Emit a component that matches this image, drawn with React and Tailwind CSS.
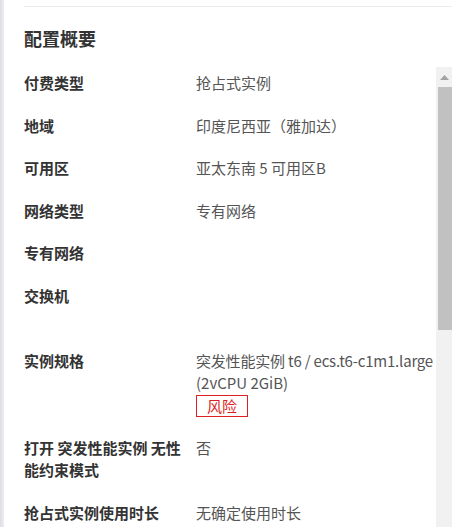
import React from "react";

const rows = [
  { label: "付费类型", value: "抢占式实例" },
  { label: "地域", value: "印度尼西亚（雅加达）" },
  { label: "可用区", value: "亚太东南 5 可用区B" },
  { label: "网络类型", value: "专有网络" },
  { label: "专有网络", value: "" },
  { label: "交换机", value: "", tall: true },
];

export default function App() {
  return (
    <div
      className="w-[452px] h-[527px] bg-white flex overflow-hidden text-[#333]"
      style={{ fontFamily: '"Noto Sans CJK SC", "Noto Sans", sans-serif' }}
    >
      <div className="w-[4px] h-full bg-gradient-to-r from-[#dcdee2] to-[#eceef1] shrink-0" />
      <div className="flex-1 flex flex-col min-w-0">
        <div className="ml-[20px] mt-[6px] h-px bg-[#ebebeb]" />
        <div className="ml-[20px] mt-[20px] h-[22px] leading-[22px] text-[18px] font-bold text-[#333]">
          配置概要
        </div>
        <div className="flex flex-1 mt-[18px] min-h-0">
          <div className="flex-1 min-w-0 pl-[20px] pt-[5px] flex flex-col gap-[20.6px] text-[15px] leading-[22px]">
            {rows.map((r) => (
              <div key={r.label} className={`flex ${r.tall ? "h-[44px]" : "h-[22px]"}`}>
                <div className="w-[172px] shrink-0 font-bold text-[#333]">{r.label}</div>
                <div className="flex-1 text-[#555]">{r.value}</div>
              </div>
            ))}
            <div className="flex">
              <div className="w-[172px] shrink-0 font-bold text-[#333]">实例规格</div>
              <div className="flex-1 text-[#555] flex flex-col items-start">
                <div className="tracking-[-0.2px]">突发性能实例 t6 / ecs.t6-c1m1.large</div>
                <div>(2vCPU 2GiB)</div>
                <div className="mt-px h-[22px] w-[52px] border border-[#e02020] text-[#e02020] text-[15px] leading-[20px] text-center">
                  风险
                </div>
              </div>
            </div>
            <div className="flex">
              <div className="w-[172px] shrink-0 font-bold text-[#333] pr-[8px]">
                打开 突发性能实例 无性能约束模式
              </div>
              <div className="flex-1 text-[#555]">否</div>
            </div>
            <div className="flex">
              <div className="w-[172px] shrink-0 font-bold text-[#333]">抢占式实例使用时长</div>
              <div className="flex-1 text-[#555]">无确定使用时长</div>
            </div>
          </div>
          <div className="w-[16px] shrink-0 bg-[#f1f1f1] flex flex-col">
            <div className="h-[20px] flex items-center justify-center">
              <svg width="9" height="5" viewBox="0 0 9 5">
                <polygon points="0,5 9,5 4.5,0" fill="#a3a3a3" />
              </svg>
            </div>
            <div className="ml-[2px] h-[243px] bg-[#c1c1c1]" />
          </div>
        </div>
      </div>
    </div>
  );
}
